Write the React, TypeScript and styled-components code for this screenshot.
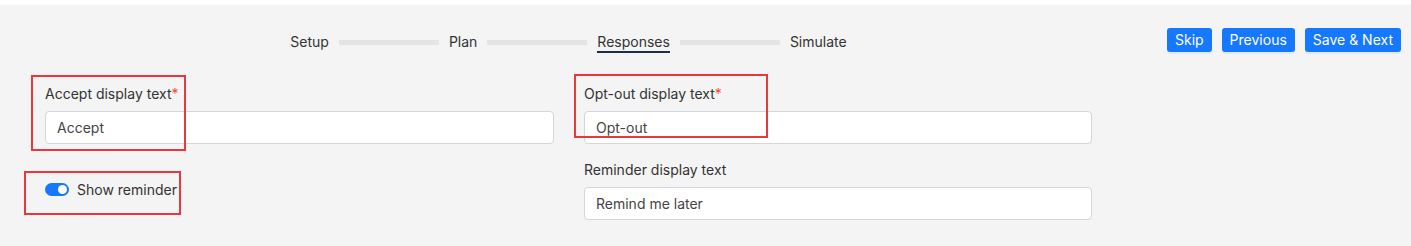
import { Fragment } from 'react';
import styled, { createGlobalStyle } from 'styled-components';

const GlobalStyle = createGlobalStyle`
  body {
    margin: 0;
    background: #ffffff;
    font-family: Inter, "Noto Sans", Arial, sans-serif;
  }
`;

const Page = styled.div`
  position: relative;
  margin-top: 5px;
  height: 241px;
  background: #f4f4f4;
  color: #333;
  font-size: 14px;
`;

const Header = styled.div`
  display: flex;
  align-items: flex-start;
  gap: 30px;
  padding: 23px 10px 0 0;
`;

const Stepper = styled.div`
  flex: 1;
  display: flex;
  justify-content: center;
  align-items: center;
  margin-top: 5px;
`;

const Step = styled.span<{ $active?: boolean }>`
  line-height: 18px;
  border-bottom: 2px solid ${(p) => (p.$active ? '#1c2e4a' : 'transparent')};
  color: #333;
`;

const Connector = styled.span`
  width: 100px;
  height: 5px;
  margin: 0 10px 2px;
  background: #e4e4e4;
`;

const Actions = styled.div`
  display: flex;
  gap: 10px;
`;

const ActionButton = styled.button`
  height: 24px;
  padding: 0 8px;
  border: none;
  border-radius: 3px;
  background: #1677ff;
  color: #fff;
  font-family: inherit;
  font-size: 14px;
  line-height: 24px;
  box-shadow: 0 2px 0 rgba(5, 145, 255, 0.1);
  cursor: pointer;
`;

const Form = styled.div`
  display: grid;
  grid-template-columns: 509px 508px;
  column-gap: 30px;
  row-gap: 16px;
  margin-top: 31px;
  padding: 0 45px;
`;

const Field = styled.div`
  display: flex;
  flex-direction: column;
  gap: 7px;
`;

const Label = styled.label`
  line-height: 20px;
  color: #333;
`;

const Required = styled.span`
  color: #f5483b;
`;

const Input = styled.input`
  box-sizing: border-box;
  height: 33px;
  padding: 0 11px;
  border: 1px solid #d3d6db;
  border-radius: 4px;
  background: #fff;
  color: #444;
  font-family: inherit;
  font-size: 14px;
  outline: none;
`;

const ToggleRow = styled.div`
  display: flex;
  align-items: center;
  gap: 8px;
  margin-top: 19px;
  height: 20px;
`;

const Switch = styled.span<{ $on?: boolean }>`
  position: relative;
  width: 24px;
  height: 13px;
  border-radius: 7px;
  background: ${(p) => (p.$on ? '#1677ff' : '#bfbfbf')};

  &::after {
    content: '';
    position: absolute;
    top: 2px;
    left: ${(p) => (p.$on ? '13px' : '2px')};
    width: 9px;
    height: 9px;
    border-radius: 50%;
    background: #fff;
  }
`;

const Callout = styled.div<{ $left: number; $top: number; $w: number; $h: number }>`
  position: absolute;
  left: ${(p) => p.$left}px;
  top: ${(p) => p.$top}px;
  width: ${(p) => p.$w}px;
  height: ${(p) => p.$h}px;
  box-sizing: border-box;
  border: 2px solid #e8383d;
  pointer-events: none;
`;

const steps = ['Setup', 'Plan', 'Responses', 'Simulate'];

const App = () => {
  return (
    <>
      <GlobalStyle />
      <Page>
        <Header>
          <Stepper>
            {steps.map((s, i) => (
              <Fragment key={s}>
                {i > 0 && <Connector />}
                <Step $active={s === 'Responses'}>{s}</Step>
              </Fragment>
            ))}
          </Stepper>
          <Actions>
            <ActionButton>Skip</ActionButton>
            <ActionButton>Previous</ActionButton>
            <ActionButton>Save &amp; Next</ActionButton>
          </Actions>
        </Header>

        <Form>
          <Field>
            <Label>
              Accept display text<Required>*</Required>
            </Label>
            <Input defaultValue="Accept" />
          </Field>
          <Field>
            <Label>
              Opt-out display text<Required>*</Required>
            </Label>
            <Input defaultValue="Opt-out" />
          </Field>
          <ToggleRow>
            <Switch $on />
            <span>Show reminder</span>
          </ToggleRow>
          <Field>
            <Label>Reminder display text</Label>
            <Input defaultValue="Remind me later" />
          </Field>
        </Form>

        <Callout $left={31} $top={70} $w={155} $h={76} />
        <Callout $left={24} $top={166} $w={157} $h={44} />
        <Callout $left={574} $top={69} $w={194} $h={64} />
      </Page>
    </>
  );
};

export default App;
